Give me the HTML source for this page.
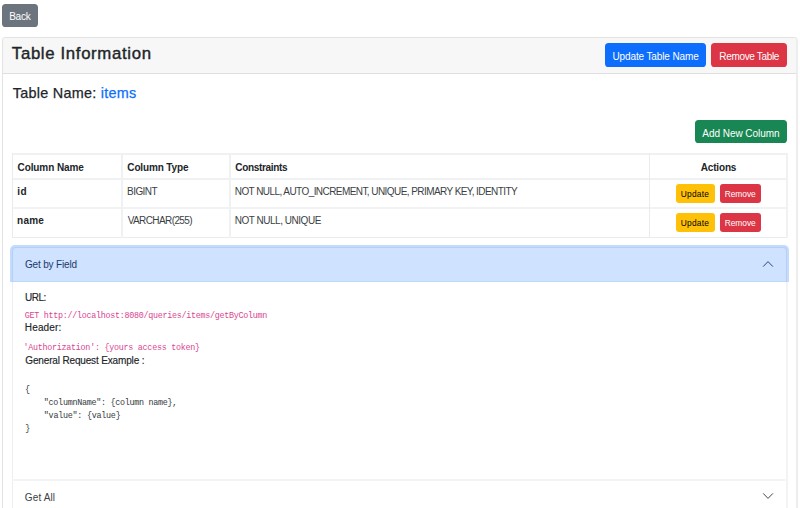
<!DOCTYPE html>
<html><head><meta charset="utf-8">
<style>
*{box-sizing:border-box;margin:0;padding:0}
html,body{width:800px;height:508px;overflow:hidden;background:#fff}
body{font-family:"Liberation Sans",sans-serif;color:#212529;position:relative}
.abs{position:absolute}
.t{position:absolute;white-space:pre;line-height:1}
.hl{position:absolute;height:1px;background:#e6e9ec}
.vl{position:absolute;width:1px;background:#e6e9ec}
</style></head><body>
<div class="abs" style="left:2px;top:4px;width:36px;height:23px;background:#6c757d;border-radius:3.6px"></div>

<div class="abs" style="left:2px;top:37px;width:796px;height:480px;border:1px solid #e3e3e3;border-right:2px solid #ededed;border-radius:3.6px"></div>
<div class="abs" style="left:3px;top:38px;width:793px;height:36px;background:#f7f7f7;border-bottom:1px solid #dfdfdf;border-radius:3px 3px 0 0"></div>
<div class="abs" style="left:605px;top:43px;width:101px;height:24px;background:#0d6efd;border-radius:3.6px"></div>
<div class="abs" style="left:711px;top:43px;width:76px;height:24px;background:#dc3545;border-radius:3.6px"></div>

<div class="abs" style="left:695px;top:120px;width:92px;height:23px;background:#198754;border-radius:3.6px"></div>

<div class="hl" style="left:12px;top:153px;width:776px;height:2px;background:#eff1f3"></div>
<div class="hl" style="left:12px;top:178px;width:776px;height:2px;background:#eff1f3"></div>
<div class="hl" style="left:12px;top:207px;width:776px;height:2px;background:#f0f2f4"></div>
<div class="hl" style="left:12px;top:237px;width:776px;height:1px;background:#e9ecef"></div>
<div class="vl" style="left:12px;top:153px;height:85px;background:#e9ecef"></div>
<div class="vl" style="left:786px;top:153px;height:85px;width:2px;background:#eff1f3"></div>
<div class="vl" style="left:121px;top:153px;height:85px;width:2px;background:#eff1f3"></div>
<div class="vl" style="left:229px;top:153px;height:85px;width:2px;background:#eff1f3"></div>
<div class="vl" style="left:649px;top:153px;height:85px;width:1px;background:#e9ecef"></div>

<div class="abs" style="left:676px;top:184px;width:39px;height:19px;background:#ffc107;border-radius:3px"></div>
<div class="abs" style="left:720px;top:184px;width:41px;height:19px;background:#dc3545;border-radius:3px"></div>
<div class="abs" style="left:676px;top:213px;width:39px;height:19px;background:#ffc107;border-radius:3px"></div>
<div class="abs" style="left:720px;top:213px;width:41px;height:19px;background:#dc3545;border-radius:3px"></div>

<!-- accordion -->
<div class="vl" style="left:12px;top:250px;height:260px;background:#eceff2"></div>
<div class="vl" style="left:786px;top:250px;height:260px;width:2px;background:#f1f3f5"></div>
<div class="hl" style="left:12px;top:479px;width:776px;height:2px;background:#f3f4f6"></div>
<div class="abs" style="left:10px;top:245px;width:779px;height:37px;background:#c4dbfe;border-radius:5px 5px 0 0"></div>
<div class="abs" style="left:12px;top:247px;width:775px;height:35px;background:#b4cff8;border-radius:3.6px 3.6px 0 0"></div>
<div class="abs" style="left:13px;top:248px;width:773px;height:34px;background:#cfe2ff;border-radius:3px 3px 0 0;box-shadow:inset 0 -1px 0 #bdd6fb"></div>
<svg class="abs" style="left:762px;top:259px" width="12" height="10" viewBox="0 0 12 10"><path d="M1.2 7.6 L6 2.6 L10.9 7.6" fill="none" stroke="#052c65" stroke-opacity="1" stroke-width="0.85"/></svg>
<svg class="abs" style="left:762px;top:490.7px" width="12" height="10" viewBox="0 0 12 10"><path d="M1.2 2.4 L6 7.4 L10.9 2.4" fill="none" stroke="#212529" stroke-opacity="1" stroke-width="0.85"/></svg>
<div class="t" id="back" style="left:9.17px;top:12.00px;font-size:10px;font-weight:400;color:#ffffff;font-family:'Liberation Sans',sans-serif;letter-spacing:-0.245px">Back</div>
<div class="t" id="title" style="left:11.87px;top:46.00px;font-size:16.8px;font-weight:400;color:#212529;font-family:'Liberation Sans',sans-serif;letter-spacing:0.649px;-webkit-text-stroke:0.4px currentColor">Table Information</div>
<div class="t" id="tname" style="left:12.78px;top:86.00px;font-size:14.4px;font-weight:400;color:#212529;font-family:'Liberation Sans',sans-serif;letter-spacing:0.260px;-webkit-text-stroke:0.25px currentColor">Table Name: <span style="color:#0d6efd">items</span></div>
<div class="t" id="utn" style="left:612.54px;top:52.00px;font-size:10px;font-weight:400;color:#ffffff;font-family:'Liberation Sans',sans-serif;letter-spacing:-0.128px">Update Table Name</div>
<div class="t" id="rt" style="left:719.32px;top:52.00px;font-size:10px;font-weight:400;color:#ffffff;font-family:'Liberation Sans',sans-serif;letter-spacing:-0.333px">Remove Table</div>
<div class="t" id="anc" style="left:702.35px;top:129.00px;font-size:10px;font-weight:400;color:#ffffff;font-family:'Liberation Sans',sans-serif;letter-spacing:-0.046px">Add New Column</div>
<div class="t" id="h1" style="left:17.50px;top:163.00px;font-size:10px;font-weight:700;color:#212529;font-family:'Liberation Sans',sans-serif;letter-spacing:-0.087px">Column Name</div>
<div class="t" id="h2" style="left:127.30px;top:163.00px;font-size:10px;font-weight:700;color:#212529;font-family:'Liberation Sans',sans-serif;letter-spacing:-0.143px">Column Type</div>
<div class="t" id="h3" style="left:235.28px;top:163.00px;font-size:10px;font-weight:700;color:#212529;font-family:'Liberation Sans',sans-serif;letter-spacing:-0.317px">Constraints</div>
<div class="t" id="h4" style="left:700.68px;top:163.00px;font-size:10px;font-weight:700;color:#212529;font-family:'Liberation Sans',sans-serif;letter-spacing:-0.157px">Actions</div>
<div class="t" id="r1c1" style="left:17.24px;top:187.00px;font-size:10px;font-weight:700;color:#212529;font-family:'Liberation Sans',sans-serif;letter-spacing:0.500px">id</div>
<div class="t" id="r1c2" style="left:127.10px;top:187.00px;font-size:10px;font-weight:400;color:#3a3f44;font-family:'Liberation Sans',sans-serif;letter-spacing:-0.583px">BIGINT</div>
<div class="t" id="r1c3" style="left:234.74px;top:187.00px;font-size:10px;font-weight:400;color:#3a3f44;font-family:'Liberation Sans',sans-serif;letter-spacing:-0.568px">NOT NULL, AUTO_INCREMENT, UNIQUE, PRIMARY KEY, IDENTITY</div>
<div class="t" id="r1u" style="left:680.79px;top:190.00px;font-size:8.4px;font-weight:400;color:#000000;font-family:'Liberation Sans',sans-serif;letter-spacing:0.221px">Update</div>
<div class="t" id="r1r" style="left:724.74px;top:190.00px;font-size:8.4px;font-weight:400;color:#ffffff;font-family:'Liberation Sans',sans-serif;letter-spacing:-0.038px">Remove</div>
<div class="t" id="r2c1" style="left:17.08px;top:216.00px;font-size:10px;font-weight:700;color:#212529;font-family:'Liberation Sans',sans-serif;letter-spacing:0.237px">name</div>
<div class="t" id="r2c2" style="left:127.67px;top:216.00px;font-size:10px;font-weight:400;color:#3a3f44;font-family:'Liberation Sans',sans-serif;letter-spacing:-0.592px">VARCHAR(255)</div>
<div class="t" id="r2c3" style="left:234.74px;top:216.00px;font-size:10px;font-weight:400;color:#3a3f44;font-family:'Liberation Sans',sans-serif;letter-spacing:-0.475px">NOT NULL, UNIQUE</div>
<div class="t" id="r2u" style="left:680.79px;top:219.00px;font-size:8.4px;font-weight:400;color:#000000;font-family:'Liberation Sans',sans-serif;letter-spacing:0.221px">Update</div>
<div class="t" id="r2r" style="left:724.74px;top:219.00px;font-size:8.4px;font-weight:400;color:#ffffff;font-family:'Liberation Sans',sans-serif;letter-spacing:-0.038px">Remove</div>
<div class="t" id="gbf" style="left:24.88px;top:260.00px;font-size:10px;font-weight:400;color:#1a3a6a;font-family:'Liberation Sans',sans-serif;letter-spacing:-0.147px">Get by Field</div>
<div class="t" id="url" style="left:25.06px;top:293.00px;font-size:10px;font-weight:400;color:#212529;font-family:'Liberation Sans',sans-serif;letter-spacing:-0.500px;-webkit-text-stroke:0.15px currentColor">URL:</div>
<div class="t" id="code1" style="left:24.86px;top:312.00px;font-size:8.4px;font-weight:400;color:#d94690;font-family:'Liberation Mono',monospace;letter-spacing:-0.277px">GET http://localhost:8080/queries/items/getByColumn</div>
<div class="t" id="header" style="left:24.82px;top:323.00px;font-size:10px;font-weight:400;color:#212529;font-family:'Liberation Sans',sans-serif;letter-spacing:0.140px;-webkit-text-stroke:0.15px currentColor">Header:</div>
<div class="t" id="code2" style="left:23.38px;top:344.00px;font-size:8.4px;font-weight:400;color:#d94690;font-family:'Liberation Mono',monospace;letter-spacing:-0.257px">'Authorization': {yours access token}</div>
<div class="t" id="gre" style="left:25.30px;top:356.00px;font-size:10px;font-weight:400;color:#212529;font-family:'Liberation Sans',sans-serif;letter-spacing:-0.154px;-webkit-text-stroke:0.15px currentColor">General Request Example :</div>
<div class="t" id="getall" style="left:24.83px;top:493.00px;font-size:10px;font-weight:400;color:#3a3f44;font-family:'Liberation Sans',sans-serif;letter-spacing:0.126px">Get All</div>
<div class="t" id="pre1" style="left:24.90px;top:386.00px;font-size:8.4px;font-weight:400;color:#33383d;font-family:'Liberation Mono',monospace;letter-spacing:-0.300px">{</div>
<div class="t" id="pre2" style="left:43.85px;top:399.00px;font-size:8.4px;font-weight:400;color:#33383d;font-family:'Liberation Mono',monospace;letter-spacing:-0.266px">"columnName": {column name},</div>
<div class="t" id="pre3" style="left:43.80px;top:412.00px;font-size:8.4px;font-weight:400;color:#33383d;font-family:'Liberation Mono',monospace;letter-spacing:-0.235px">"value": {value}</div>
<div class="t" id="pre4" style="left:25.35px;top:425.00px;font-size:8.4px;font-weight:400;color:#33383d;font-family:'Liberation Mono',monospace;letter-spacing:-0.300px">}</div>
</body></html>
